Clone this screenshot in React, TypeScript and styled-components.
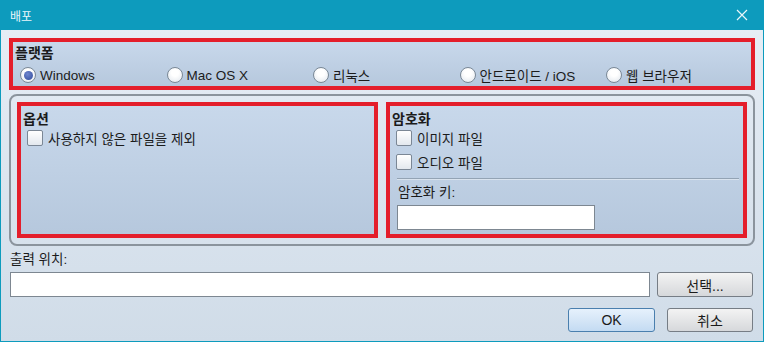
import React from 'react'
import styled, { createGlobalStyle } from 'styled-components'

const GlobalStyle = createGlobalStyle`
  html, body {
    margin: 0;
    padding: 0;
    width: 764px;
    height: 342px;
    overflow: hidden;
  }
  * {
    box-sizing: border-box;
  }
`

const Window = styled.div`
  width: 764px;
  height: 342px;
  display: flex;
  flex-direction: column;
  border: 1px solid #0d9bbd;
  border-top: none;
  font-family: 'Liberation Sans', 'Noto Sans CJK KR', sans-serif;
  font-size: 13.5px;
  color: #1b1b1b;
`

const TitleBar = styled.div`
  height: 30px;
  flex: none;
  display: flex;
  align-items: center;
  justify-content: space-between;
  padding: 0 14px 0 9px;
  background: #0d9bbd;
  color: #e9f6fa;
  font-size: 12px;
`

const Body = styled.div`
  flex: 1;
  display: flex;
  flex-direction: column;
  padding: 8px 8px 0 8px;
  background: linear-gradient(#e6edf5, #d0dce8);
`

const RedBox = styled.div<{ $pad?: string }>`
  border: 4px solid #e41e2b;
  background: linear-gradient(#c8d8eb, #b6c8dd);
  padding: ${({ $pad }) => $pad || '4px 4px 4px 2px'};
  display: flex;
  flex-direction: column;
`

const BoxTitle = styled.div`
  font-weight: bold;
  font-size: 14px;
  line-height: 18px;
`

const RadioRow = styled.div`
  display: grid;
  grid-template-columns: repeat(5, 146.5px);
  padding-left: 5px;
  margin-top: 3px;
`

const Option = styled.label<{ $gap?: number }>`
  display: flex;
  align-items: center;
  gap: ${({ $gap }) => $gap ?? 4}px;
  height: 20px;
  white-space: nowrap;
`

const RadioDot = styled.span<{ $checked?: boolean }>`
  width: 16px;
  height: 16px;
  border-radius: 50%;
  border: 1px solid #7a8896;
  background: radial-gradient(circle at 50% 35%, #ffffff 30%, #dfe5ec 100%);
  display: flex;
  align-items: center;
  justify-content: center;
  flex: none;

  &::after {
    content: '';
    display: ${({ $checked }) => ($checked ? 'block' : 'none')};
    width: 9px;
    height: 9px;
    border-radius: 50%;
    background: radial-gradient(circle at 40% 35%, #6f86cf, #2f4a9a);
  }
`

const CheckBox = styled.span`
  width: 16px;
  height: 16px;
  border: 1px solid #7b8795;
  border-radius: 2px;
  background: linear-gradient(#ffffff, #e3e8ee);
  flex: none;
`

const Group = styled.div`
  margin-top: 4px;
  border: 2px solid #8b949d;
  border-radius: 8px;
  padding: 6px;
  display: grid;
  grid-template-columns: 1fr 1fr;
  gap: 8px;
  height: 152px;
`

const CheckList = styled.div`
  display: flex;
  flex-direction: column;
  gap: 4px;
  padding-left: 4px;
`

const Separator = styled.div`
  height: 1px;
  background: #93a3b4;
  border-bottom: 1px solid #d9e3ee;
  margin: 6px 0 0 5px;
  box-sizing: content-box;
`

const FieldLabel = styled.div<{ $m?: string }>`
  line-height: 16px;
  margin: ${({ $m }) => $m || '0'};
`

const TextInput = styled.div<{ $width?: number }>`
  height: 25px;
  background: #ffffff;
  border: 1px solid #7d8791;
  ${({ $width }) => ($width ? `width: ${$width}px;` : 'flex: 1;')}
`

const FieldRow = styled.div<{ $left?: number }>`
  display: flex;
  gap: 7px;
  margin-top: 4px;
  padding: 0 2px 0 ${({ $left }) => $left ?? 1}px;
`

const ButtonRow = styled.div`
  display: flex;
  justify-content: flex-end;
  gap: 12px;
  margin-top: 11px;
  padding-right: 2px;
`

const Button = styled.div<{ $primary?: boolean; $width: number; $height?: number }>`
  width: ${({ $width }) => $width}px;
  height: ${({ $height }) => $height || 24}px;
  border: 1px solid ${({ $primary }) => ($primary ? '#4a7fae' : '#767d85')};
  border-radius: 3px;
  background: ${({ $primary }) =>
    $primary ? 'linear-gradient(#e6f1fc, #c4dbf2)' : 'linear-gradient(#f3f3f3, #d6d8db)'};
  display: flex;
  align-items: center;
  justify-content: center;
  font-size: 14px;
`

const CloseIcon = () => (
  <svg width="14" height="14" viewBox="0 0 14 14">
    <path d="M2 2 L12 12 M12 2 L2 12" stroke="#e9f6fa" strokeWidth="1.2" />
  </svg>
)

const platforms = ['Windows', 'Mac OS X', '리눅스', '안드로이드 / iOS', '웹 브라우저']

export default function App() {
  return (
    <>
      <GlobalStyle />
      <Window>
        <TitleBar>
          <span>배포</span>
          <CloseIcon />
        </TitleBar>
        <Body>
          <RedBox $pad="2px 4px 1px 2px">
            <BoxTitle>플랫폼</BoxTitle>
            <RadioRow>
              {platforms.map((p, i) => (
                <Option key={p}>
                  <RadioDot $checked={i === 0} />
                  {p}
                </Option>
              ))}
            </RadioRow>
          </RedBox>
          <Group>
            <RedBox>
              <BoxTitle>옵션</BoxTitle>
              <CheckList>
                <Option $gap={5}>
                  <CheckBox />
                  사용하지 않은 파일을 제외
                </Option>
              </CheckList>
            </RedBox>
            <RedBox>
              <BoxTitle>암호화</BoxTitle>
              <CheckList>
                <Option $gap={5}>
                  <CheckBox />
                  이미지 파일
                </Option>
                <Option $gap={5}>
                  <CheckBox />
                  오디오 파일
                </Option>
              </CheckList>
              <Separator />
              <FieldLabel $m="5px 0 0 6px">암호화 키:</FieldLabel>
              <FieldRow $left={5}>
                <TextInput $width={198} />
              </FieldRow>
            </RedBox>
          </Group>
          <FieldLabel $m="6px 0 0 1px">출력 위치:</FieldLabel>
          <FieldRow>
            <TextInput />
            <Button $width={96} $height={25}>선택...</Button>
          </FieldRow>
          <ButtonRow>
            <Button $primary $width={87}>OK</Button>
            <Button $width={86}>취소</Button>
          </ButtonRow>
        </Body>
      </Window>
    </>
  )
}
